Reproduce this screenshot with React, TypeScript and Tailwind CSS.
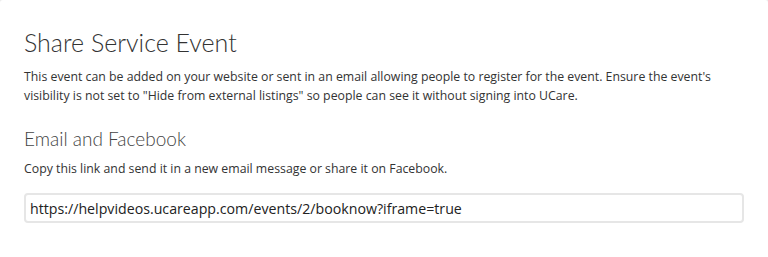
import React from 'react';

export default function App() {
  return (
    <div className="w-[768px] h-[257px] bg-[#ececec]">
      <div className="flex h-full flex-col rounded-t-[3px] bg-white px-6 pt-[26px] font-['Open_Sans','Noto_Sans',sans-serif] text-[#333]">
        <h2 className="font-['Lato','Open_Sans',sans-serif] text-[25px] leading-[32px] font-light text-[#333]">
          Share Service Event
        </h2>
        <p className="mt-[9px] text-[12.3px] leading-[19px] text-[#333]">
          This event can be added on your website or sent in an email allowing people to register for the event. Ensure the event's visibility is not set to "Hide from external listings" so people can see it without signing into UCare.
        </p>
        <h3 className="mt-[21px] font-['Lato','Open_Sans',sans-serif] text-[19px] leading-[26px] font-light text-[#444]">
          Email and Facebook
        </h3>
        <p className="mt-[7px] text-[12.3px] leading-[19px] text-[#333]">
          Copy this link and send it in a new email message or share it on Facebook.
        </p>
        <input
          readOnly
          value="https://helpvideos.ucareapp.com/events/2/booknow?iframe=true"
          className="mt-[15px] h-[30px] w-[720px] rounded-[4px] border-2 border-[#e6e6e6] px-[4px] font-['Open_Sans','Noto_Sans',sans-serif] text-[14.2px] text-[#222] outline-none"
        />
      </div>
    </div>
  );
}
